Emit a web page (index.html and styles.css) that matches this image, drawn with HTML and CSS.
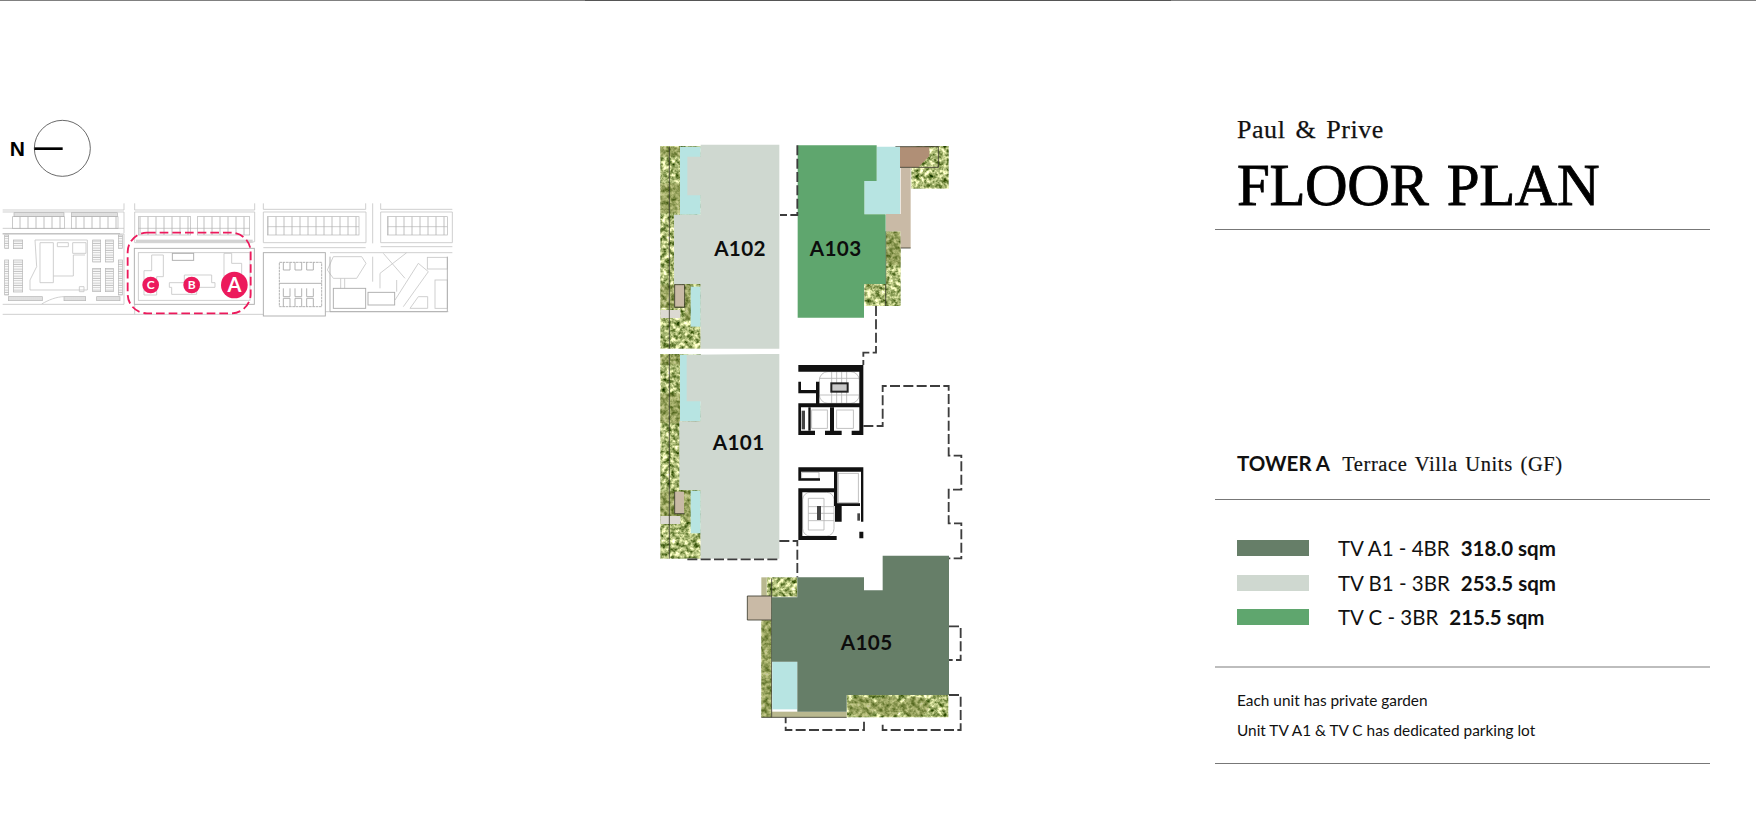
FILE: index.html
```html
<!DOCTYPE html>
<html lang="en">
<head>
<meta charset="utf-8">
<title>Floor Plan</title>
<link rel="stylesheet" href="styles.css">
</head>
<body>
<div class="topline"><span class="seg"></span><span class="seg seg-dark"></span><span class="seg"></span></div>
<main class="page">
  <section class="left">
    <svg class="keymap" viewBox="0 0 1410 690" role="img" aria-label="Site key plan">
      <defs>
        <pattern id="ticks" width="24" height="60" patternUnits="userSpaceOnUse"><path class="pt" d="M12 0V60"/></pattern>
        <pattern id="ticks-dense" width="6" height="20" patternUnits="userSpaceOnUse"><path class="pt-d" d="M3 0V20"/></pattern>
        <pattern id="rungs" width="20" height="7" patternUnits="userSpaceOnUse"><path class="pt-d" d="M0 3H20"/></pattern>
      </defs>
      <circle class="compass" cx="187" cy="145" r="84"/>
      <path class="needle" d="M103 146H188"/>
      <text class="north" x="52" y="167">N</text>

      <g class="road">
        <path d="M8 330H372V310M404 310V330H764V310M790 310V328H1097V310M1142 310V328H1357"/>
        <path d="M8 336H372V400M8 385H372M404 336H764V425L750 428H404ZM790 336H1098V428H790ZM1142 336H1357V428H1142ZM1142 440H1357"/>
        <path d="M790 443H1097M990 458H1357M8 613H372V402M8 643H790M404 613V643M8 402H372M1118 310V430M1118 470V545M976 635H1345"/>
      </g>
      <rect class="bar" x="408" y="419" width="350" height="9"/>
      <path class="bar-line" d="M8 401H360"/>

      <g class="road-dark">
        <rect x="38" y="350" width="155" height="36" fill="url(#ticks)"/>
        <rect x="214" y="350" width="140" height="36" fill="url(#ticks)"/>
        <rect x="415" y="350" width="157" height="55" fill="url(#ticks)"/>
        <rect x="592" y="350" width="157" height="55" fill="url(#ticks)"/>
        <rect x="802" y="350" width="275" height="55" fill="url(#ticks)"/>
        <rect x="1162" y="350" width="180" height="55" fill="url(#ticks)"/>
        <path d="M415 385H749M802 380H1077M1162 380H1342"/>
        <rect x="42" y="338" width="150" height="12" fill="url(#ticks-dense)"/>
        <rect x="214" y="338" width="138" height="12" fill="url(#ticks-dense)"/>
        <rect x="278" y="420" width="24" height="66" fill="url(#rungs)"/>
        <rect x="316" y="420" width="24" height="66" fill="url(#rungs)"/>
        <rect x="278" y="505" width="24" height="70" fill="url(#rungs)"/>
        <rect x="316" y="505" width="24" height="70" fill="url(#rungs)"/>
        <rect x="40" y="480" width="28" height="96" fill="url(#rungs)"/>
        <rect x="40" y="420" width="28" height="26" fill="url(#rungs)"/>
        <rect x="14" y="405" width="12" height="40" fill="url(#rungs)"/>
        <rect x="14" y="480" width="12" height="105" fill="url(#rungs)"/>
        <rect x="355" y="405" width="12" height="40" fill="url(#rungs)"/>
        <rect x="355" y="480" width="12" height="105" fill="url(#rungs)"/>
        <rect x="25" y="590" width="102" height="12" fill="url(#ticks-dense)"/>
        <rect x="192" y="590" width="65" height="12" fill="url(#ticks-dense)"/>
        <rect x="290" y="590" width="70" height="12" fill="url(#ticks-dense)"/>
      </g>
      <g class="road">
        <path d="M105 420H262V570H90V540L110 500ZM120 428H160V548H120ZM160 528H220V465H255M172 428H205V440H172ZM218 428H258V460H218Z"/>
        <path d="M125 612C145 600 170 590 192 590M238 560H252V575H238Z"/>
      </g>

      <rect class="site" x="403" y="445" width="360" height="168"/>
      <g class="road">
        <rect x="415" y="458" width="335" height="143"/>
        <path d="M455 465H490V530H470V585H432V512H455ZM672 460H695V490H725V560H672Z"/>
        <path d="M508 548H553V525H635V548H645V562H590V583H515V562H508Z"/>
      </g>
      <rect class="site" x="517" y="460" width="64" height="21"/>

      <rect class="site" x="790" y="458" width="186" height="190"/>
      <g class="site">
        <rect class="dash" x="838" y="487" width="127" height="133"/>
        <path d="M850 487V510H870V487M885 487V510H905V487M920 487V510H940V487M850 620V595H870V620M885 620V595H905V620M920 620V595H940V620M838 550H965M850 565V590H870V565M885 565V590H905V565M920 565V590H940V565"/>
      </g>
      <g class="road">
        <path d="M1000 470H1085L1098 490L1070 535H1000L982 510ZM1022 535V565M1034 535V565"/>
        <path d="M1150 460L1215 535M1220 458L1140 520M1140 520V565M1190 540V575M1185 600L1255 490L1285 515L1210 620M1230 625L1255 590H1283V625Z"/>
        <rect x="1282" y="472" width="60" height="35"/>
        <rect x="1305" y="540" width="37" height="85"/>
      </g>
      <g class="site">
        <rect x="1000" y="565" width="97" height="60"/>
        <rect x="1104" y="577" width="80" height="38"/>
        <path d="M990 635V470M1342 470V635H990"/>
      </g>

      <rect class="selection" x="383" y="398" width="369" height="242" rx="58"/>
      <circle class="pin" cx="703" cy="555" r="40"/>
      <circle class="pin" cx="575" cy="555" r="25"/>
      <circle class="pin" cx="452" cy="555" r="25"/>
      <text class="pin-label pin-a" x="703" y="576">A</text>
      <text class="pin-label" x="575" y="568">B</text>
      <text class="pin-label" x="452" y="568">C</text>
    </svg>
  </section>

  <section class="plan">
    <svg class="plan-svg" viewBox="0 0 1020 1830" role="img" aria-label="Tower A ground floor plan">
      <defs>
        <filter id="foliage" x="0" y="0" width="1" height="1" color-interpolation-filters="sRGB">
          <feTurbulence type="fractalNoise" baseFrequency=".075" numOctaves="3" seed="7"/>
          <feColorMatrix values="1.6 0 0 0 -.14  1.4 0 0 0 .02  1.5 0 0 0 -.3  0 0 0 0 1"/>
          <feComposite in2="SourceGraphic" operator="in"/>
        </filter>
      </defs>

      <!-- gardens -->
      <g class="garden">
        <rect x="61" y="48" width="121" height="608"/>
        <rect x="61" y="672" width="121" height="614"/>
        <rect x="814" y="48" width="112" height="128"/>
        <rect x="738" y="304" width="44" height="224"/>
        <rect x="673" y="462" width="65" height="66"/>
        <rect x="380" y="1342" width="92" height="58"/>
        <rect x="364" y="1402" width="31" height="360"/>
        <rect x="620" y="1695" width="305" height="67"/>
      </g>

      <g class="olive">
        <rect x="61" y="50" width="59" height="30"/>
        <rect x="61" y="160" width="59" height="90"/>
        <rect x="61" y="464" width="91" height="70"/>
        <rect x="134" y="464" width="18" height="106"/>
        <rect x="61" y="674" width="59" height="30"/>
        <rect x="61" y="790" width="59" height="90"/>
        <rect x="61" y="1085" width="91" height="75"/>
        <rect x="134" y="1085" width="18" height="90"/>
        <rect x="738" y="304" width="44" height="100"/>
        <rect x="364" y="1402" width="31" height="360"/>
        <ellipse cx="665" cy="1730" rx="42" ry="30"/>
        <ellipse cx="745" cy="1730" rx="42" ry="30"/>
        <ellipse cx="825" cy="1730" rx="42" ry="30"/>
      </g>
      <rect class="patch" x="61" y="540" width="60" height="24"/>
      <rect class="patch" x="61" y="1158" width="60" height="24"/>
      <rect class="paving" x="104" y="464" width="28" height="66"/>
      <rect class="paving" x="104" y="1085" width="28" height="66"/>

      <rect class="sand" x="395" y="1745" width="225" height="17"/>
      <rect class="sand" x="364" y="1342" width="16" height="60"/>
      <rect class="paving" x="322" y="1398" width="73" height="72"/>
      <path class="paving" d="M782 112H812V354H782V304H738V252H782Z"/>
      <rect class="deck" x="767" y="50" width="128" height="62"/>
      <path class="garden" d="M895 50V112H835L868 78V50Z"/>
      <path class="dark-thin" d="M767 50H895V112H767ZM782 354H812M737 304V528M88 50V656M88 672V1286M104 464H134V532H104ZM104 1085V1151H134M322 1398H395M322 1398V1470H395M395 1345V1762M364 1762H620"/>

      <!-- pools -->
      <path class="pool" d="M120 50H182V254H120Z"/>
      <path class="pool" d="M152 470H182V590H152Z"/>
      <path class="pool" d="M120 674H182V874H120Z"/>
      <path class="pool" d="M152 1082H182V1210H152Z"/>
      <path class="pool" d="M710 50H780V252H673V153H710Z"/>
      <rect class="pool" x="397" y="1595" width="75" height="143"/>

      <!-- units -->
      <path class="unit-b" d="M182 44H418V656H182V462H102V254H182V196H142V80H182Z"/>
      <path class="unit-b" d="M140 674L418 672V1286H182V1080H118V874H182V814H140Z"/>
      <path class="unit-c" d="M473 46H710V153H673V253H737V462H672V563H473Z"/>
      <path class="unit-a" d="M472 1342H672V1381H728V1277H927V1695H620V1745H472V1595H395V1402H472Z"/>

      <!-- stair and lift linework under the walls -->
      <g class="core-line">
        <rect x="538" y="725" width="120" height="95" rx="26"/>
        <path d="M575 725V820M590 725V820M605 725V820M620 725V820M538 745H658M538 795H658"/>
        <rect x="515" y="840" width="47" height="55"/>
        <rect x="590" y="840" width="50" height="55"/>
        <rect x="595" y="1030" width="60" height="88"/>
        <rect x="488" y="1087" width="94" height="131" rx="22"/>
        <path d="M505 1105V1200H552V1105ZM505 1130H582M505 1150H582M505 1172H582"/>
        <rect x="485" y="1027" width="52" height="18"/>
      </g>
      <rect class="core-box" x="574" y="760" width="49" height="25"/>
      <rect class="core-mid" x="485" y="842" width="10" height="56"/>
      <rect class="core-mid" x="531" y="1128" width="12" height="42"/>
      <rect class="core-mid" x="652" y="1150" width="8" height="22"/>

      <!-- cores -->
      <g class="walls">
        <path d="M475 705H670V915H635V902H658V725H475Z"/>
        <path d="M475 755H483V780H528V755H538V820H665V832H483V902H525V915H475V820H528V790H475Z"/>
        <path d="M505 832H512V902H505ZM570 832H582V902H570ZM555 902H605V915H555Z"/>
        <path d="M475 1012H670V1175H663V1025H592V1120H660V1128H605V1175H585V1128H582V1025H483V1045H540V1052H475Z"/>
        <path d="M475 1075H582V1087H487V1218H590V1230H475ZM658 1205H670V1225H658Z"/>
      </g>

      <!-- boundary dashes -->
      <g class="dashes">
        <path d="M472 46V255H420"/>
        <path d="M708 528V668H670V705"/>
        <path d="M670 888H728V768H926V977H964V1079H926V1180H964V1285H927"/>
        <path d="M142 1288H418"/>
        <path d="M418 1233H472V1342"/>
        <path d="M927 1489H962V1590H927"/>
        <path d="M927 1695H962V1800H728V1775"/>
        <path d="M672 1775V1800H437V1762"/>
      </g>

      <text class="unit-label" x="300" y="377">A102</text>
      <text class="unit-label" x="587" y="379">A103</text>
      <text class="unit-label" x="296" y="961">A101</text>
      <text class="unit-label" x="680" y="1561">A105</text>
    </svg>
  </section>

  <aside class="panel">
    <header class="head">
      <p class="brand">Paul &amp; Prive</p>
      <h1 class="title">FLOOR PLAN</h1>
    </header>
    <div class="tower">
      <strong class="tower-name">TOWER A</strong>
      <span class="tower-sub">Terrace Villa Units (GF)</span>
    </div>
    <ul class="legend">
      <li class="row"><span class="swatch swatch-a"></span><span class="row-name">TV A1 - 4BR</span><b class="row-area">318.0 sqm</b></li>
      <li class="row"><span class="swatch swatch-b"></span><span class="row-name">TV B1 - 3BR</span><b class="row-area">253.5 sqm</b></li>
      <li class="row"><span class="swatch swatch-c"></span><span class="row-name">TV C - 3BR</span><b class="row-area">215.5 sqm</b></li>
    </ul>
    <div class="notes">
      <p>Each unit has private garden</p>
      <p>Unit TV A1 &amp; TV C has dedicated parking lot</p>
    </div>
  </aside>
</main>
</body>
</html>
```
FILE: styles.css
```css
* { box-sizing: border-box; }
html, body { margin: 0; height: 100%; background: #fff; overflow: hidden; }
body { font-family: "Lato", "Liberation Sans", sans-serif; color: #111; }

.topline { display: flex; height: 1px; }
.seg { flex: 1; background: #808080; }
.seg-dark { background: #555; }

.page { display: flex; align-items: flex-start; }

/* left column: compass + key plan */
.left { width: 470px; flex: none; padding-top: 99px; }
.keymap { display: block; width: 470px; height: 230px; }
.compass { fill: #fff; stroke: #444; stroke-width: 2.4; }
.needle { stroke: #000; stroke-width: 8; fill: none; }
.north { font: 700 63px "Liberation Sans", sans-serif; fill: #000; text-anchor: middle; }
.road, .road-dark, .site { fill: none; }
.road { stroke: #c8c8c8; stroke-width: 2.6; }
.road-dark { stroke: #b4b4b4; stroke-width: 2; }
.site { stroke: #adadad; stroke-width: 2.8; }
.dash { stroke-dasharray: 8 2; }
.bar { fill: #d3d3d3; }
.bar-line { stroke: #c4c4c4; stroke-width: 4; }
.pt { stroke: #a0a0a0; stroke-width: 2; }
.pt-d { stroke: #a0a0a0; stroke-width: 2; }
.selection { fill: none; stroke: #ec1a5c; stroke-width: 5.5; stroke-dasharray: 26 12; }
.pin { fill: #ec1a5c; }
.pin-label { font: 700 36px "Lato", "Liberation Sans", sans-serif; fill: #fff; text-anchor: middle; }
.pin-a { font-size: 60px; }

/* floor plan */
.plan { width: 340px; flex: none; margin-left: 170px; padding-top: 129px; }
.plan-svg { display: block; width: 340px; height: 610px; }
.garden { fill: #000; filter: url(#foliage); }
.olive { fill: #7d8540; opacity: .45; }
.patch { fill: #dcd9d2; }
.sand { fill: #b9b88f; }
.paving { fill: #c9baa6; }
.deck { fill: #b08f76; }
.dark-thin { fill: none; stroke: #3b3b2e; stroke-width: 2.5; }
.pool { fill: #b7e4e2; }
.unit-a { fill: #667e68; }
.unit-b { fill: #cfd8d0; }
.unit-c { fill: #5fa66e; }
.walls { fill: #111; }
.core-line { fill: none; stroke: #b5b5b5; stroke-width: 2.5; }
.core-box { fill: #c9c9c9; stroke: #222; stroke-width: 6; }
.core-mid { fill: #444; }
.dashes { fill: none; stroke: #3d3d3d; stroke-width: 5.5; stroke-dasharray: 30 10; }
.unit-label { font: 700 62px "Lato", "Liberation Sans", sans-serif; fill: #0d0d0d; text-anchor: middle; letter-spacing: 1px; }

/* right panel */
.panel { width: 495px; flex: none; margin-left: 235px; padding-top: 114px; }
.head { height: 115px; padding-left: 22px; border-bottom: 1px solid #777; }
.brand { margin: 0; font: 400 26px/30px "Liberation Serif", serif; word-spacing: 3px; letter-spacing: .55px; -webkit-text-stroke: .25px #111; }
.title { margin: 10px 0 0; font: 400 59px/60px "Liberation Serif", serif; color: #000; letter-spacing: -.4px; word-spacing: 4px; -webkit-text-stroke: .8px #000; }

.tower { display: flex; align-items: baseline; gap: 12px; height: 270px; padding: 220px 0 0 22px; border-bottom: 1px solid #777; }
.tower-name { font: 700 20.5px/26px "Lato", sans-serif; }
.tower-sub { font: 400 20.5px/26px "Liberation Serif", serif; letter-spacing: .6px; word-spacing: 2px; -webkit-text-stroke: .2px #111; }

.legend { list-style: none; margin: 0; padding: 31px 0 0 22px; height: 168px; border-bottom: 2px solid #bdbdbd; }
.row { display: flex; align-items: center; height: 34.5px; font-size: 20.5px; }
.swatch { width: 72px; height: 16px; margin-right: 29px; flex: none; }
.swatch-a { background: #667e68; }
.swatch-b { background: #cfd8d0; }
.swatch-c { background: #5fa66e; }
.row-name { margin-right: 11px; }
.row-area { font-weight: 700; }

.notes { height: 96px; padding: 22px 0 0 22px; border-bottom: 1px solid #777; font-size: 15.4px; }
.notes p { margin: 0 0 10px; line-height: 20px; }
```
